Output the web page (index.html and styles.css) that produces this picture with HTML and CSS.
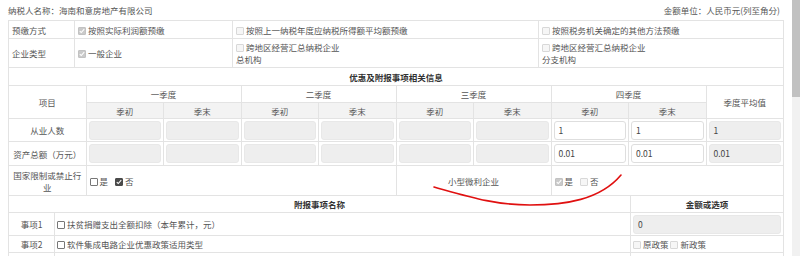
FILE: index.html
```html
<!DOCTYPE html>
<html lang="zh">

<head>
  <meta charset="UTF-8">
  <meta name="viewport" content="width=device-width, initial-scale=1.0">
  <title>企业所得税月（季）度预缴申报</title>
  <link rel="stylesheet" href="styles.css">
</head>

<body>
  <div class="page">
    <div class="content">
      <div class="head-line">
        <span>纳税人名称：海南和意房地产有限公司</span>
        <span>金额单位：人民币元(列至角分)</span>
      </div>

      <table class="tbl-top">
        <colgroup>
          <col style="width:66px">
          <col style="width:158px">
          <col style="width:306px">
          <col>
        </colgroup>
        <tr class="r-18">
          <td>预缴方式</td>
          <td><span class="cb dis on"><svg viewBox="0 0 8 8" width="6" height="6"><path d="M1 4.2 L3 6 L7 1.6" /></svg></span>按照实际利润额预缴</td>
          <td><span class="cb dis"></span>按照上一纳税年度应纳税所得额平均额预缴</td>
          <td><span class="cb dis"></span>按照税务机关确定的其他方法预缴</td>
        </tr>
        <tr class="r-29">
          <td>企业类型</td>
          <td><span class="cb dis on"><svg viewBox="0 0 8 8" width="6" height="6"><path d="M1 4.2 L3 6 L7 1.6" /></svg></span>一般企业</td>
          <td class="two-line"><span class="cb dis"></span>跨地区经营汇总纳税企业<br>总机构</td>
          <td class="two-line"><span class="cb dis"></span>跨地区经营汇总纳税企业<br>分支机构</td>
        </tr>
      </table>

      <table class="tbl-quarter">
        <tr class="r-18">
          <th colspan="10" class="title">优惠及附报事项相关信息</th>
        </tr>
        <tr class="r-17">
          <th rowspan="2">项目</th>
          <th colspan="2">一季度</th>
          <th colspan="2">二季度</th>
          <th colspan="2">三季度</th>
          <th colspan="2">四季度</th>
          <th rowspan="2">季度平均值</th>
        </tr>
        <tr class="r-16 sub">
          <th>季初</th>
          <th>季末</th>
          <th>季初</th>
          <th>季末</th>
          <th>季初</th>
          <th>季末</th>
          <th>季初</th>
          <th>季末</th>
        </tr>
        <tr class="r-23">
          <td class="center">从业人数</td>
          <td class="fld"><div class="box off"></div></td>
          <td class="fld"><div class="box off"></div></td>
          <td class="fld"><div class="box off"></div></td>
          <td class="fld"><div class="box off"></div></td>
          <td class="fld"><div class="box off"></div></td>
          <td class="fld"><div class="box off"></div></td>
          <td class="fld"><div class="box">1</div></td>
          <td class="fld"><div class="box">1</div></td>
          <td class="fld"><div class="box off">1</div></td>
        </tr>
        <tr class="r-24">
          <td class="center">资产总额（万元）</td>
          <td class="fld"><div class="box off"></div></td>
          <td class="fld"><div class="box off"></div></td>
          <td class="fld"><div class="box off"></div></td>
          <td class="fld"><div class="box off"></div></td>
          <td class="fld"><div class="box off"></div></td>
          <td class="fld"><div class="box off"></div></td>
          <td class="fld"><div class="box">0.01</div></td>
          <td class="fld"><div class="box">0.01</div></td>
          <td class="fld"><div class="box off">0.01</div></td>
        </tr>
        <tr class="r-30">
          <td class="center two-line">国家限制或禁止行<br>业</td>
          <td colspan="4">
            <span class="cb"></span><span class="opt">是</span>
            <span class="cb on"><svg viewBox="0 0 8 8" width="6" height="6"><path d="M1 4.2 L3 6 L7 1.6" /></svg></span><span class="opt">否</span>
          </td>
          <td colspan="2" class="center">小型微利企业</td>
          <td colspan="3">
            <span class="cb dis on"><svg viewBox="0 0 8 8" width="6" height="6"><path d="M1 4.2 L3 6 L7 1.6" /></svg></span><span class="opt">是</span>
            <span class="cb dis"></span><span class="opt">否</span>
          </td>
        </tr>
      </table>

      <table class="tbl-items">
        <colgroup>
          <col style="width:46px">
          <col style="width:576px">
          <col>
        </colgroup>
        <tr class="r-17">
          <th colspan="2" class="title">附报事项名称</th>
          <th class="title">金额或选项</th>
        </tr>
        <tr class="r-23">
          <td class="center">事项1</td>
          <td class="item"><span class="cb"></span>扶贫捐赠支出全额扣除（本年累计，元）</td>
          <td class="fld"><div class="box off">0</div></td>
        </tr>
        <tr class="r-17">
          <td class="center">事项2</td>
          <td class="item"><span class="cb"></span>软件集成电路企业优惠政策适用类型</td>
          <td class="item"><span class="cb dis"></span>原政策 <span class="cb dis"></span>新政策</td>
        </tr>
        <tr class="r-23">
          <td></td>
          <td></td>
          <td></td>
        </tr>
      </table>

      <svg class="mark" width="800" height="256" viewBox="0 0 800 256">
        <path d="M434 187 C470 197 495 205 530 205 C565 205 600 200 621 175" />
      </svg>
    </div>
    <div class="scrollbar">
      <div class="thumb"></div>
    </div>
  </div>
</body>

</html>
```

FILE: styles.css
```css
html,
body {
  height: 100%;
  margin: 0;
  overflow: hidden;
}

body {
  font-family: "Noto Sans CJK SC", "Liberation Sans", sans-serif;
  font-size: 8.5px;
  color: #555;
  background: #fff;
}

.page {
  display: flex;
  height: 100%;
}

.content {
  flex: 1;
  padding: 0 8px;
  position: relative;
}

.scrollbar {
  width: 8px;
  background: #f1f1f1;
}

.scrollbar .thumb {
  height: 97px;
  background: #c1c1c1;
}

.head-line {
  display: flex;
  justify-content: space-between;
  height: 20px;
  line-height: 20px;
  padding-right: 4px;
}

table {
  width: 100%;
  border-collapse: collapse;
  table-layout: fixed;
  margin-top: -1px;
}

.tbl-top {
  margin-top: 0;
}

td,
th {
  border: 1px solid #e3e3e3;
  padding: 0 3px;
  font-weight: normal;
  white-space: nowrap;
  overflow: hidden;
}

th {
  text-align: center;
}

th.title {
  font-weight: bold;
  color: #333;
}

.sub th {
  background: #f3f3f3;
}

.center {
  text-align: center;
}

.two-line {
  line-height: 12px;
}

.r-16 { height: 16px; }
.r-17 { height: 17px; }
.r-18 { height: 18px; }
.r-23 { height: 23px; }
.r-24 { height: 24px; }
.r-29 { height: 29px; }
.r-30 { height: 30px; }

.fld {
  padding: 0 2px;
}

.item {
  padding: 0 2px;
}

.box {
  height: 19px;
  line-height: 17px;
  padding: 0 4px;
  box-sizing: border-box;
  border: 1px solid #dedede;
  border-radius: 3px;
  background: #fff;
  color: #444;
}

.box.off {
  background: #eee;
  border-color: #e8e8e8;
}

.cb {
  display: inline-block;
  width: 8px;
  height: 8px;
  box-sizing: border-box;
  border: 1px solid #777;
  border-radius: 1px;
  background: #fff;
  vertical-align: -1px;
  margin-right: 2px;
}

.cb svg {
  display: block;
}

.cb path {
  fill: none;
  stroke: #fff;
  stroke-width: 1.4;
}

.cb.on {
  background: #4a4a4a;
  border-color: #4a4a4a;
}

.cb.dis {
  border-color: #d8d8d8;
  background: #f6f6f6;
}

.cb.dis.on {
  background: #cacaca;
  border-color: #c2c2c2;
}

.opt {
  margin-right: 5px;
}

.mark {
  position: absolute;
  top: 0;
  left: 0;
  pointer-events: none;
}

.mark path {
  fill: none;
  stroke: #e01010;
  stroke-width: 1.6;
  stroke-linecap: round;
}
```
